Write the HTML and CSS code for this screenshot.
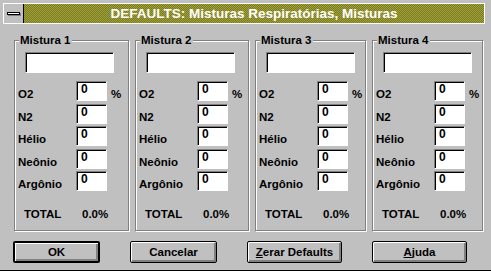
FILE: index.html
```html
<!DOCTYPE html>
<html lang="pt">
<head>
    <meta charset="UTF-8">
    <title>DEFAULTS: Misturas Respiratórias, Misturas</title>
    <link rel="stylesheet" href="styles.css">
</head>
<body>
    <div class="titlebar">
        <div class="sysmenu"><span class="sysbar"></span></div>
        <div class="caption">DEFAULTS: Misturas Respiratórias, Misturas</div>
    </div>

    <div class="groups">
        <fieldset class="mix">
            <legend>Mistura 1</legend>
            <div class="name"></div>
            <div class="rows">
                <div class="row"><span class="label">O2</span><div class="field">0</div><span class="unit">%</span></div>
                <div class="row"><span class="label">N2</span><div class="field">0</div></div>
                <div class="row"><span class="label">Hélio</span><div class="field">0</div></div>
                <div class="row"><span class="label">Neônio</span><div class="field">0</div></div>
                <div class="row"><span class="label">Argônio</span><div class="field">0</div></div>
            </div>
            <div class="total"><span class="total-label">TOTAL</span><span>0.0%</span></div>
        </fieldset>

        <fieldset class="mix">
            <legend>Mistura 2</legend>
            <div class="name"></div>
            <div class="rows">
                <div class="row"><span class="label">O2</span><div class="field">0</div><span class="unit">%</span></div>
                <div class="row"><span class="label">N2</span><div class="field">0</div></div>
                <div class="row"><span class="label">Hélio</span><div class="field">0</div></div>
                <div class="row"><span class="label">Neônio</span><div class="field">0</div></div>
                <div class="row"><span class="label">Argônio</span><div class="field">0</div></div>
            </div>
            <div class="total"><span class="total-label">TOTAL</span><span>0.0%</span></div>
        </fieldset>

        <fieldset class="mix">
            <legend>Mistura 3</legend>
            <div class="name"></div>
            <div class="rows">
                <div class="row"><span class="label">O2</span><div class="field">0</div><span class="unit">%</span></div>
                <div class="row"><span class="label">N2</span><div class="field">0</div></div>
                <div class="row"><span class="label">Hélio</span><div class="field">0</div></div>
                <div class="row"><span class="label">Neônio</span><div class="field">0</div></div>
                <div class="row"><span class="label">Argônio</span><div class="field">0</div></div>
            </div>
            <div class="total"><span class="total-label">TOTAL</span><span>0.0%</span></div>
        </fieldset>

        <fieldset class="mix">
            <legend>Mistura 4</legend>
            <div class="name"></div>
            <div class="rows">
                <div class="row"><span class="label">O2</span><div class="field">0</div><span class="unit">%</span></div>
                <div class="row"><span class="label">N2</span><div class="field">0</div></div>
                <div class="row"><span class="label">Hélio</span><div class="field">0</div></div>
                <div class="row"><span class="label">Neônio</span><div class="field">0</div></div>
                <div class="row"><span class="label">Argônio</span><div class="field">0</div></div>
            </div>
            <div class="total"><span class="total-label">TOTAL</span><span>0.0%</span></div>
        </fieldset>
    </div>

    <div class="buttons">
        <button class="btn btn-default">OK</button>
        <button class="btn">Cancelar</button>
        <button class="btn btn-wide"><u>Z</u>erar Defaults</button>
        <button class="btn btn-wide"><u>A</u>juda</button>
    </div>
</body>
</html>
```

FILE: styles.css
```css
body {
    margin: 0;
    width: 491px;
    height: 271px;
    overflow: hidden;
    background-color: #c0c0c0;
    box-shadow: inset 0 -1px 0 #000;
    font-family: "Liberation Sans", Arial, sans-serif;
    font-size: 11.5px;
    font-weight: bold;
    color: #000;
}

/* Title bar */
.titlebar {
    display: flex;
    height: 21px;
    margin: 3px 6px 0 3px;
    border: 1px solid #fff;
    box-sizing: border-box;
}

.sysmenu {
    width: 19px;
    border-right: 1px solid #000;
    display: flex;
    align-items: center;
    justify-content: center;
}

.sysbar {
    width: 11px;
    height: 1px;
    border: 1px solid #000;
    background-color: #fff;
    box-shadow: 1px 1px 0 #808080;
}

.caption {
    flex: 1;
    text-align: center;
    color: #fff;
    font-size: 13.5px;
    line-height: 19px;
    background: repeating-conic-gradient(#808000 0 25%, #9c9c5c 0 50%) 0 0 / 2px 2px;
}

/* Group boxes */
.groups {
    display: grid;
    grid-template-columns: 115px 114px 111px 111px;
    column-gap: 6px;
    margin-top: 10px;
    padding-left: 14px;
}

.mix {
    margin: 0;
    min-width: 0;
    padding: 5px 0 9px 3px;
    border: 1px solid #808080;
    box-shadow: inset 1px 1px 0 #fff, 1px 1px 0 #fff;
}

.mix legend {
    margin-left: 1px;
    padding: 0 1px;
    line-height: 13px;
    background-color: #c0c0c0;
}

.name {
    width: 89px;
    height: 21px;
    margin-left: 7px;
    box-sizing: border-box;
    background-color: #fff;
    border: 1px solid;
    border-color: #808080 #fff #fff #808080;
    box-shadow: inset 1px 1px 0 #000;
}

.rows {
    display: flex;
    flex-direction: column;
    gap: 2.5px;
    margin-top: 8px;
}

.row {
    display: flex;
    height: 20px;
}

.label,
.unit {
    align-self: flex-end;
    line-height: 13px;
}

.label {
    width: 58px;
}

.unit {
    margin-left: 4px;
}

.field {
    width: 31px;
    height: 20px;
    box-sizing: border-box;
    padding: 2px 0 0 4px;
    font-size: 12px;
    line-height: 10px;
    background-color: #fff;
    border: 1px solid;
    border-color: #808080 #fff #fff #808080;
    box-shadow: inset 1px 1px 0 #000;
}

.total {
    display: flex;
    margin-top: 17px;
    padding-left: 6px;
    line-height: 13px;
}

.total-label {
    width: 58px;
}

/* Buttons */
.buttons {
    display: flex;
    gap: 30px;
    margin-top: 10px;
    padding-left: 13px;
}

.btn {
    width: 87px;
    height: 22px;
    padding: 0;
    box-sizing: border-box;
    font: inherit;
    color: #000;
    background-color: #c0c0c0;
    border: 1px solid #000;
    border-radius: 2px;
    box-shadow: inset 1px 1px 0 #fff, inset -2px -2px 0 #808080;
}

.btn-default {
    border-width: 2px;
}

.btn-wide {
    width: 95px;
}

.btn u {
    text-decoration-thickness: 1px;
    text-underline-offset: 1px;
}
```
